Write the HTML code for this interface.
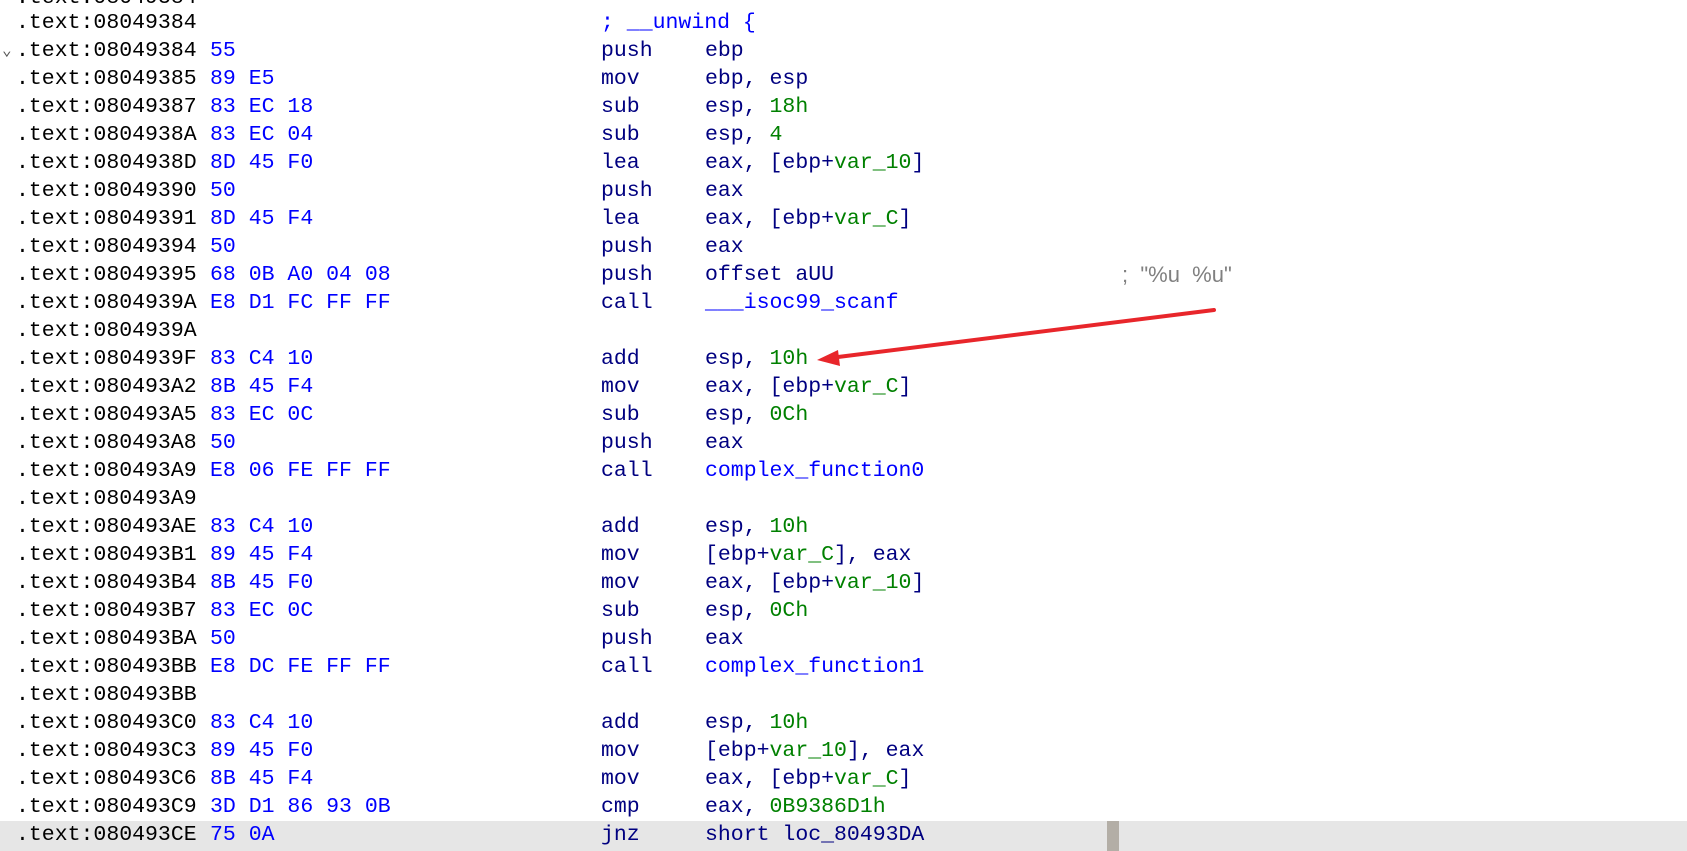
<!DOCTYPE html>
<html><head><meta charset="utf-8"><style>
body{margin:0;width:1687px;height:851px;overflow:hidden;background:#fff;position:relative;font-family:"Liberation Mono",monospace;font-size:21.5px;}
.r{position:absolute;left:0;width:1687px;height:28px;line-height:28px;white-space:pre;}
.r span{position:absolute;top:0}
.a{left:16px;color:#000}
.b{left:210px;color:#0000ff}
.m{left:601px;color:#000080}
.o{left:705px;color:#000080}
.g{color:#008000;font-style:normal}
.c{left:1122px;color:#808080;font-family:"Liberation Sans",sans-serif;font-size:22px}
.hl{background:#e6e6e6}
</style></head><body>
<div class="r" style="top:-16px"><span class="a">.text:08049384</span></div>
<div class="r" style="top:9px"><span class="a">.text:08049384</span><span class="m" style="color:#0000ff">; __unwind {</span></div>
<div class="r" style="top:37px"><span style="left:2px;color:#555;font-size:16px">⌄</span><span class="a">.text:08049384</span><span class="b">55</span><span class="m">push</span><span class="o">ebp</span></div>
<div class="r" style="top:65px"><span class="a">.text:08049385</span><span class="b">89 E5</span><span class="m">mov</span><span class="o">ebp, esp</span></div>
<div class="r" style="top:93px"><span class="a">.text:08049387</span><span class="b">83 EC 18</span><span class="m">sub</span><span class="o">esp, <i class="g">18h</i></span></div>
<div class="r" style="top:121px"><span class="a">.text:0804938A</span><span class="b">83 EC 04</span><span class="m">sub</span><span class="o">esp, <i class="g">4</i></span></div>
<div class="r" style="top:149px"><span class="a">.text:0804938D</span><span class="b">8D 45 F0</span><span class="m">lea</span><span class="o">eax, [ebp+<i class="g">var_10</i>]</span></div>
<div class="r" style="top:177px"><span class="a">.text:08049390</span><span class="b">50</span><span class="m">push</span><span class="o">eax</span></div>
<div class="r" style="top:205px"><span class="a">.text:08049391</span><span class="b">8D 45 F4</span><span class="m">lea</span><span class="o">eax, [ebp+<i class="g">var_C</i>]</span></div>
<div class="r" style="top:233px"><span class="a">.text:08049394</span><span class="b">50</span><span class="m">push</span><span class="o">eax</span></div>
<div class="r" style="top:261px"><span class="a">.text:08049395</span><span class="b">68 0B A0 04 08</span><span class="m">push</span><span class="o">offset aUU</span><span class="c">;  "%u  %u"</span></div>
<div class="r" style="top:289px"><span class="a">.text:0804939A</span><span class="b">E8 D1 FC FF FF</span><span class="m">call</span><span class="o" style="color:#0000ff">___isoc99_scanf</span></div>
<div class="r" style="top:317px"><span class="a">.text:0804939A</span></div>
<div class="r" style="top:345px"><span class="a">.text:0804939F</span><span class="b">83 C4 10</span><span class="m">add</span><span class="o">esp, <i class="g">10h</i></span></div>
<div class="r" style="top:373px"><span class="a">.text:080493A2</span><span class="b">8B 45 F4</span><span class="m">mov</span><span class="o">eax, [ebp+<i class="g">var_C</i>]</span></div>
<div class="r" style="top:401px"><span class="a">.text:080493A5</span><span class="b">83 EC 0C</span><span class="m">sub</span><span class="o">esp, <i class="g">0Ch</i></span></div>
<div class="r" style="top:429px"><span class="a">.text:080493A8</span><span class="b">50</span><span class="m">push</span><span class="o">eax</span></div>
<div class="r" style="top:457px"><span class="a">.text:080493A9</span><span class="b">E8 06 FE FF FF</span><span class="m">call</span><span class="o" style="color:#0000ff">complex_function0</span></div>
<div class="r" style="top:485px"><span class="a">.text:080493A9</span></div>
<div class="r" style="top:513px"><span class="a">.text:080493AE</span><span class="b">83 C4 10</span><span class="m">add</span><span class="o">esp, <i class="g">10h</i></span></div>
<div class="r" style="top:541px"><span class="a">.text:080493B1</span><span class="b">89 45 F4</span><span class="m">mov</span><span class="o">[ebp+<i class="g">var_C</i>], eax</span></div>
<div class="r" style="top:569px"><span class="a">.text:080493B4</span><span class="b">8B 45 F0</span><span class="m">mov</span><span class="o">eax, [ebp+<i class="g">var_10</i>]</span></div>
<div class="r" style="top:597px"><span class="a">.text:080493B7</span><span class="b">83 EC 0C</span><span class="m">sub</span><span class="o">esp, <i class="g">0Ch</i></span></div>
<div class="r" style="top:625px"><span class="a">.text:080493BA</span><span class="b">50</span><span class="m">push</span><span class="o">eax</span></div>
<div class="r" style="top:653px"><span class="a">.text:080493BB</span><span class="b">E8 DC FE FF FF</span><span class="m">call</span><span class="o" style="color:#0000ff">complex_function1</span></div>
<div class="r" style="top:681px"><span class="a">.text:080493BB</span></div>
<div class="r" style="top:709px"><span class="a">.text:080493C0</span><span class="b">83 C4 10</span><span class="m">add</span><span class="o">esp, <i class="g">10h</i></span></div>
<div class="r" style="top:737px"><span class="a">.text:080493C3</span><span class="b">89 45 F0</span><span class="m">mov</span><span class="o">[ebp+<i class="g">var_10</i>], eax</span></div>
<div class="r" style="top:765px"><span class="a">.text:080493C6</span><span class="b">8B 45 F4</span><span class="m">mov</span><span class="o">eax, [ebp+<i class="g">var_C</i>]</span></div>
<div class="r" style="top:793px"><span class="a">.text:080493C9</span><span class="b">3D D1 86 93 0B</span><span class="m">cmp</span><span class="o">eax, <i class="g">0B9386D1h</i></span></div>
<div class="r hl" style="top:821px;height:30px;line-height:28px"><span class="a">.text:080493CE</span><span class="b">75 0A</span><span class="m">jnz</span><span class="o">short loc_80493DA</span><span style="left:1107px;top:0;width:12px;height:30px;background:#b3aea6"></span></div>
<svg style="position:absolute;left:0;top:0" width="1687" height="851">
<line x1="1214" y1="310" x2="830" y2="358" stroke="#e8262b" stroke-width="4" stroke-linecap="round"/>
<polygon points="817,360 838,350 840,366" fill="#e8262b"/>
</svg>
</body></html>
